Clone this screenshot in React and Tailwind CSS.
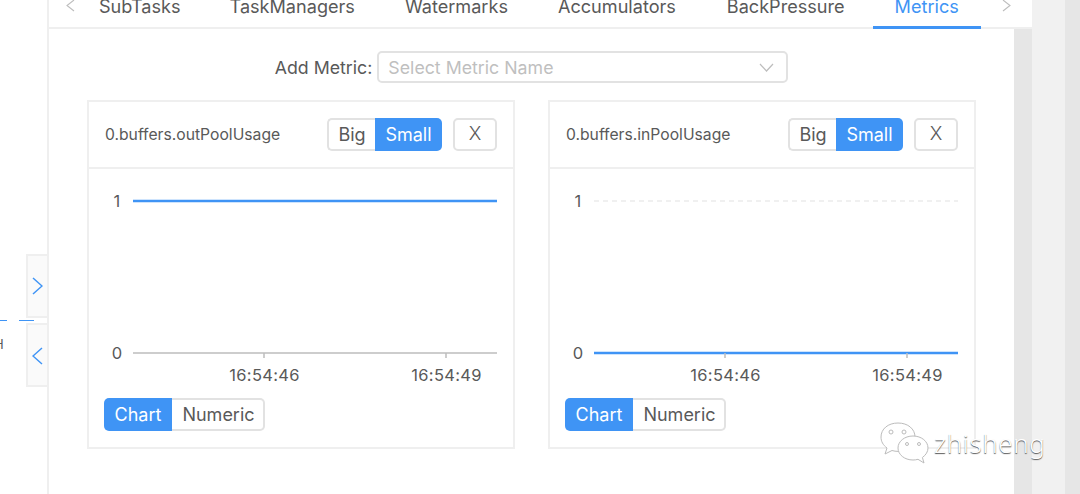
const font = { fontFamily: 'Inter, "Noto Sans", sans-serif' }

const tabs = [
  { name: 'SubTasks', cls: 'ml-px' },
  { name: 'TaskManagers', cls: 'ml-[5px]' },
  { name: 'Watermarks', cls: 'ml-[6px]' },
  { name: 'Accumulators', cls: 'ml-[6px]' },
  { name: 'BackPressure', cls: 'ml-[7px]' },
  { name: 'Metrics', cls: 'ml-[6px]' },
]

function Chevron({ dir = 'right', className = '' }) {
  const d = dir === 'right' ? 'M1 1l9 8-9 8' : 'M10 1l-9 8 9 8'
  return (
    <svg width="11" height="18" viewBox="0 0 11 18" fill="none" stroke="currentColor" strokeWidth="1.5" className={className}>
      <path d={d} />
    </svg>
  )
}

function TabChevron({ dir = 'right' }) {
  const d = dir === 'right' ? 'M1 0l7 5.500-7 5.500' : 'M8 0l-7 5.500 7 5.500'
  return (
    <svg width="9" height="12" viewBox="0 0 9 12" fill="none" stroke="#bdbdbd" strokeWidth="1.100">
      <path d={d} />
    </svg>
  )
}

function MetricChart({ full }) {
  const label = { fontSize: 16.500, letterSpacing: 0.300, fill: '#595959' }
  return (
    <svg width="423" height="224" viewBox="0 0 423 224" className="block" style={font}>
      {full ? (
        <line x1="44" x2="408" y1="32" y2="32" stroke="#3f94f5" strokeWidth="2.500" />
      ) : (
        <line x1="44" x2="408" y1="32" y2="32" stroke="#ececec" strokeWidth="1.500" strokeDasharray="5 4" />
      )}
      <line x1="44" x2="408" y1="184" y2="184" stroke="#bdbdbd" strokeWidth="1.500" />
      {!full && <line x1="44" x2="408" y1="184" y2="184" stroke="#3f94f5" strokeWidth="2.500" />}
      <line x1="175" x2="175" y1="184" y2="189" stroke="#bdbdbd" strokeWidth="1.500" />
      <line x1="357" x2="357" y1="184" y2="189" stroke="#bdbdbd" strokeWidth="1.500" />
      <text x="28" y="38" textAnchor="middle" {...label}>1</text>
      <text x="28" y="190" textAnchor="middle" {...label}>0</text>
      <text x="175.500" y="212" textAnchor="middle" {...label}>16:54:46</text>
      <text x="357.500" y="212" textAnchor="middle" {...label}>16:54:49</text>
    </svg>
  )
}

function MetricCard({ name, full }) {
  return (
    <div className="w-[428px] h-[349px] border-2 border-[#efefef] flex flex-col">
      <div className="h-[67px] shrink-0 border-b-2 border-[#efefef] flex items-center pl-[16px] pr-[16px]">
        <span className="text-[15.7px] text-[#595959]">{name}</span>
        <div className="ml-auto flex">
          <div className="w-[48px] h-[33px] border-2 border-r-0 border-[#e2e2e2] rounded-l-[5px] flex items-center justify-center text-[18px] text-[#595959]">Big</div>
          <div className="w-[67px] h-[33px] bg-[#3f94f5] rounded-r-[5px] flex items-center justify-center text-[18px] text-white">Small</div>
          <div className="w-[44px] h-[33px] ml-[11px] border-2 border-[#e2e2e2] rounded-[5px] flex items-center justify-center text-[19px] font-light text-[#595959]">X</div>
        </div>
      </div>
      <div className="h-[229px] shrink-0 overflow-hidden">
        <MetricChart full={full} />
      </div>
      <div className="flex pl-[15px]">
        <div className="w-[68px] h-[33px] bg-[#3f94f5] rounded-l-[5px] flex items-center justify-center text-[18px] text-white">Chart</div>
        <div className="w-[93px] h-[33px] border-2 border-l-0 border-[#e2e2e2] rounded-r-[5px] flex items-center justify-center pl-[2px] text-[18px] text-[#595959]">Numeric</div>
      </div>
    </div>
  )
}

export default function App() {
  return (
    <div className="relative w-[1080px] h-[494px] overflow-hidden bg-white flex" style={font}>
      {/* collapsed dag panel */}
      <div className="relative w-[47px] shrink-0 flex flex-col items-end pt-[254px]">
        <div className="w-[21px] h-[64px] bg-[#fafafa] border-2 border-r-0 border-[#efefef] flex items-center justify-center text-[#3f94f5]">
          <Chevron />
        </div>
        <div className="w-full h-[5px] flex items-center">
          <div className="w-[7px] h-[1.5px] bg-[#3f94f5]" />
          <div className="w-[15px] h-[1.5px] bg-[#3f94f5] ml-[12px]" />
        </div>
        <div className="w-[21px] h-[64px] bg-[#fafafa] border-2 border-r-0 border-[#efefef] flex items-center justify-center pt-[2px] text-[#3f94f5]">
          <Chevron dir="left" />
        </div>
        <span className="absolute left-[-6px] top-[335px] text-[13px] text-[#595959]">H</span>
      </div>

      <div className="w-[985px] shrink-0 flex flex-col border-l-2 border-[#efefef]">
        <div className="h-[29px] shrink-0 border-b-2 border-[#efefef] flex items-start text-[18.1px] text-[#595959]">
          <div className="w-[27px] flex justify-end pr-[1px]">
            <TabChevron dir="left" />
          </div>
          {tabs.map(t => (
            <div
              key={t.name}
              className={`h-[29px] shrink-0 px-[22px] pb-[12px] flex items-center whitespace-nowrap border-b-[3px] ${t.cls} ${t.name === 'Metrics' ? 'text-[#3f94f5] border-[#3f94f5]' : 'border-transparent'}`}
            >
              {t.name}
            </div>
          ))}
          <div className="ml-[21px]">
            <TabChevron />
          </div>
        </div>
        <div className="flex-1 flex">
          <div className="w-[965px] bg-white flex flex-col items-center pt-[22px]">
            <div className="flex items-center h-[32px] text-[17.75px]">
              <span className="text-[#595959] mr-[5px] pt-[2px]">Add Metric:</span>
              <div className="w-[411px] h-[32px] border-2 border-[#e2e2e2] rounded-[5px] flex items-center justify-between pl-[9px] pr-[12px] text-[#bfbfbf]">
                <span className="pt-[2px]">Select Metric Name</span>
                <svg width="15" height="9" viewBox="0 0 15 9" fill="none" stroke="#bdbdbd" strokeWidth="1.200">
                  <path d="M1 1l6.500 7L14 1" />
                </svg>
              </div>
            </div>
            <div className="flex gap-[33px] mt-[17px]">
              <MetricCard name="0.buffers.outPoolUsage" full />
              <MetricCard name="0.buffers.inPoolUsage" />
            </div>
          </div>
          <div className="flex-1 bg-[#e6e6e6]" />
        </div>
      </div>

      <div className="w-[33px] shrink-0 bg-[#f1f1f1]" />
      <div className="flex-1 bg-[#e6e6e6]" />

      {/* wechat watermark over the page */}
      <div className="absolute left-[880px] top-[422px] flex items-center">
        <svg width="50" height="42" viewBox="0 0 50 42" fill="#fff" stroke="#bcbcbc" strokeWidth="1">
          <path d="M18 1C8 1 1 7 1 15c0 4.500 2 8 6 11l-2 6 7-3.500c2 .6 4 .9 6 .9 10 0 17-6.400 17-14.400S28 1 18 1z" />
          <path d="M33 14c-8.500 0-15 5.400-15 12s6.500 12 15 12c1.700 0 3.300-.2 5-.7l6 3.700-1.600-5.500c3.500-2.500 5.600-5.800 5.600-9.500 0-6.600-6.500-12-15-12z" />
          <circle cx="11" cy="10" r="2" fill="none" />
          <circle cx="24" cy="10" r="2" fill="none" />
          <circle cx="27" cy="22" r="1.500" fill="none" />
          <circle cx="39" cy="22" r="1.500" fill="none" />
        </svg>
        <span className="ml-[4px] text-[26px] font-light text-white tracking-[0.6px] [text-shadow:0_1px_1px_#555]" style={{ fontFamily: '"Noto Sans", sans-serif' }}>zhisheng</span>
      </div>
    </div>
  )
}
